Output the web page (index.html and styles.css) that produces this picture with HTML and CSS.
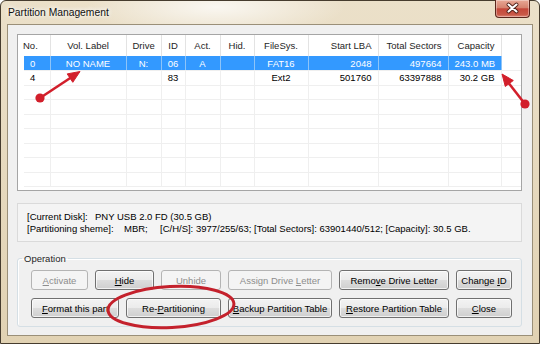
FILE: index.html
```html
<!DOCTYPE html>
<html lang="en">

<head>
    <meta charset="UTF-8">
    <title>Partition Management</title>
    <link rel="stylesheet" href="styles.css">
</head>

<body>

    <div class="window">
        <!-- Title bar -->
        <div class="titlebar">
            <span class="title">Partition Management</span>
            <button class="close-btn" title="Close">
                <svg width="33" height="17" viewBox="0 0 33 17">
                    <path d="M12.5 4.5 L20.5 11.5 M20.5 4.5 L12.5 11.5" stroke="#4a1c14" stroke-width="3.8" stroke-linecap="round" />
                    <path d="M12.5 4.5 L20.5 11.5 M20.5 4.5 L12.5 11.5" stroke="#fff" stroke-width="2.1" stroke-linecap="round" />
                </svg>
            </button>
        </div>

        <div class="client">
            <!-- Partition list -->
            <div class="list">
                <table>
                    <colgroup>
                        <col style="width:26px">
                        <col style="width:76px">
                        <col style="width:35px">
                        <col style="width:24px">
                        <col style="width:35px">
                        <col style="width:34px">
                        <col style="width:54px">
                        <col style="width:70px">
                        <col style="width:70px">
                        <col style="width:53px">
                        <col>
                    </colgroup>
                    <tr>
                        <th class="first">No.</th>
                        <th>Vol. Label</th>
                        <th>Drive</th>
                        <th>ID</th>
                        <th>Act.</th>
                        <th>Hid.</th>
                        <th>FileSys.</th>
                        <th class="r">Start LBA</th>
                        <th class="r">Total Sectors</th>
                        <th class="r">Capacity</th>
                        <th class="fill"></th>
                    </tr>
                    <tr class="selected">
                        <td>0</td>
                        <td class="c">NO NAME</td>
                        <td class="c">N:</td>
                        <td class="c">06</td>
                        <td class="c">A</td>
                        <td class="c"></td>
                        <td class="c">FAT16</td>
                        <td class="r">2048</td>
                        <td class="r">497664</td>
                        <td class="r">243.0 MB</td>
                        <td class="fill"></td>
                    </tr>
                    <tr>
                        <td>4</td>
                        <td class="c"></td>
                        <td class="c"></td>
                        <td class="c">83</td>
                        <td class="c"></td>
                        <td class="c"></td>
                        <td class="c">Ext2</td>
                        <td class="r">501760</td>
                        <td class="r">63397888</td>
                        <td class="r">30.2 GB</td>
                        <td class="fill"></td>
                    </tr>
                    <tr><td></td><td></td><td></td><td></td><td></td><td></td><td></td><td></td><td></td><td></td><td class="fill"></td></tr>
                    <tr><td></td><td></td><td></td><td></td><td></td><td></td><td></td><td></td><td></td><td></td><td class="fill"></td></tr>
                    <tr><td></td><td></td><td></td><td></td><td></td><td></td><td></td><td></td><td></td><td></td><td class="fill"></td></tr>
                    <tr><td></td><td></td><td></td><td></td><td></td><td></td><td></td><td></td><td></td><td></td><td class="fill"></td></tr>
                    <tr><td></td><td></td><td></td><td></td><td></td><td></td><td></td><td></td><td></td><td></td><td class="fill"></td></tr>
                    <tr><td></td><td></td><td></td><td></td><td></td><td></td><td></td><td></td><td></td><td></td><td class="fill"></td></tr>
                    <tr><td></td><td></td><td></td><td></td><td></td><td></td><td></td><td></td><td></td><td></td><td class="fill"></td></tr>
                </table>
            </div>

            <!-- Disk info -->
            <div class="disk-info">
                <div><span class="key-disk">[Current Disk]:</span>PNY USB 2.0 FD (30.5 GB)</div>
                <div><span class="key-scheme">[Partitioning sheme]:</span><span class="key-mbr">MBR;</span>[C/H/S]: 3977/255/63; [Total Sectors]: 63901440/512; [Capacity]: 30.5 GB.</div>
            </div>

            <!-- Operation buttons -->
            <fieldset class="operation">
                <legend>Operation</legend>
                <div class="btn-row">
                    <button class="btn w-activate" disabled><u>A</u>ctivate</button>
                    <button class="btn w-hide"><u>H</u>ide</button>
                    <button class="btn w-unhide" disabled><u>U</u>nhide</button>
                    <button class="btn w-assign" disabled>Assign Drive <u>L</u>etter</button>
                    <button class="btn w-remove">Remo<u>v</u>e Drive Letter</button>
                    <button class="btn w-change">Change <u>I</u>D</button>
                </div>
                <div class="btn-row">
                    <button class="btn w-format"><u>F</u>ormat this part</button>
                    <button class="btn w-repart">Re-<u>P</u>artitioning</button>
                    <button class="btn w-backup"><u>B</u>ackup Partition Table</button>
                    <button class="btn w-restore"><u>R</u>estore Partition Table</button>
                    <button class="btn w-close"><u>C</u>lose</button>
                </div>
            </fieldset>
        </div>
    </div>

    <!-- Red annotations drawn over the dialog -->
    <svg class="marks" width="540" height="347" viewBox="0 0 540 347">
        <g fill="#d21f2b" stroke="#d21f2b">
            <line x1="40" y1="98" x2="71" y2="77.5" stroke-width="2.6" />
            <polygon points="80,71.5 72.8,82.3 67.2,73.9" stroke-width="1" />
            <circle cx="40" cy="98" r="4.6" stroke="none" />

            <line x1="525" y1="104" x2="509" y2="83.5" stroke-width="2.6" />
            <polygon points="502,74 513.3,80.5 505.3,86.5" stroke-width="1" />
            <circle cx="525" cy="104" r="4.6" stroke="none" />
        </g>
        <ellipse cx="171" cy="307" rx="63" ry="20.5" fill="none" stroke="#c4212c" stroke-width="3" transform="rotate(-3 171 307)" />
    </svg>

</body>

</html>
```

FILE: styles.css
```css
/* Global Styles */
body {
    margin: 0;
    background: #fff;
    font-family: "Liberation Sans", Arial, sans-serif;
    font-size: 9.5px;
    color: #000;
}

/* Window frame */
.window {
    width: 540px;
    height: 344px;
    box-sizing: border-box;
    display: flex;
    flex-direction: column;
    padding: 0 6px 7px 6px;
    border: 1px solid #463c2e;
    border-radius: 6px 6px 0 0;
    background:
        radial-gradient(ellipse 130px 30px at 215px 6px, rgba(255, 255, 255, 0.75), rgba(255, 255, 255, 0)),
        linear-gradient(#ebe0c9, #e1d2b3);
}

.titlebar {
    height: 23px;
    display: flex;
    justify-content: space-between;
    align-items: flex-start;
}

.title {
    margin: 6px 0 0 1px;
    font-size: 10.3px;
    color: #111;
    text-shadow: 0 0 5px #fff, 0 0 5px #fff;
}

.close-btn {
    margin: -1px 3px 0 0;
    width: 35px;
    height: 18px;
    padding: 0;
    display: flex;
    align-items: center;
    border: 1px solid #5a261c;
    border-top: none;
    border-radius: 0 0 4px 4px;
    background: linear-gradient(#e8a896, #d6836f 45%, #c4473a 52%, #c85847 85%, #dd8372);
    box-shadow: inset 0 0 0 1px rgba(255, 255, 255, 0.35);
}

/* Client area */
.client {
    flex: 1;
    display: flex;
    flex-direction: column;
    background: #f0f0f0;
    border: 1px solid #9a8f78;
    padding: 9px 10px 8px 9px;
}

/* Partition list */
.list {
    height: 157px;
    box-sizing: border-box;
    border: 1px solid #a5a5a5;
    background: #fff;
    overflow: hidden;
}

.list table {
    margin-left: 6px;
    width: calc(100% - 6px);
    border-collapse: collapse;
    table-layout: fixed;
}

.list th {
    height: 21px;
    padding: 0 6px;
    font-weight: normal;
    color: #1e1e1e;
    white-space: nowrap;
    border-right: 1px solid #e3e3e3;
}

.list th.first {
    text-align: left;
    padding-left: 0;
    text-indent: -1px;
}

.list tr {
    height: 14.5px;
}

.list td {
    padding: 0 6px;
    line-height: 13px;
    white-space: nowrap;
    overflow: hidden;
    border-right: 1px solid #efefef;
    border-bottom: 1px solid #efefef;
}

.list .c {
    text-align: center;
}

.list .r {
    text-align: right;
}

.list .fill {
    border-right: none;
}

.list tr.selected td {
    background: #3399ff;
    color: #fff;
    border-right-color: #8ec4f8;
}

.list tr.selected td.fill {
    background: none;
}

/* Disk info */
.disk-info {
    margin-top: 12px;
    height: 39px;
    box-sizing: border-box;
    padding: 7px 9px;
    line-height: 12px;
    background: #f4f4f4;
    border: 1px solid #dadada;
    white-space: nowrap;
}

.key-disk {
    display: inline-block;
    width: 68px;
}

.key-scheme {
    display: inline-block;
    width: 97px;
}

.key-mbr {
    display: inline-block;
    width: 36px;
}

/* Operation group */
.operation {
    flex: 1;
    min-width: 0;
    margin: 11px 0 0;
    padding: 6px 0 0 13px;
    border: 1px solid #d5dfe5;
    border-radius: 3px;
    box-shadow: inset 1px 1px #fff;
}

.operation legend {
    margin-left: -9px;
    padding: 0 2px;
    color: #1e1e1e;
}

.btn-row {
    display: flex;
    gap: 7px;
}

.btn-row + .btn-row {
    margin-top: 8px;
}

.btn {
    height: 20px;
    padding: 0;
    font: inherit;
    color: #000;
    white-space: nowrap;
    overflow: hidden;
    border: 1px solid #707070;
    border-radius: 3px;
    background: linear-gradient(#f3f3f3, #ebebeb 50%, #dddddd 50%, #cfcfcf);
    box-shadow: inset 0 0 0 1px rgba(255, 255, 255, 0.7);
}

.btn:disabled {
    color: #8d8d8d;
    border-color: #b4b4b4;
    background: #f4f4f4;
    box-shadow: none;
}

.w-activate { width: 57px; }
.w-hide { width: 59px; }
.w-unhide { width: 60px; }
.w-assign { width: 104px; }
.w-remove { width: 110px; }
.w-change { width: 56px; }
.w-format { width: 88px; text-align: left; padding-left: 10px; }
.w-repart { width: 95px; }
.w-backup { width: 104px; }
.w-restore { width: 110px; }
.w-close { width: 56px; }

/* Annotations */
.marks {
    position: absolute;
    left: 0;
    top: 0;
    pointer-events: none;
}
```
